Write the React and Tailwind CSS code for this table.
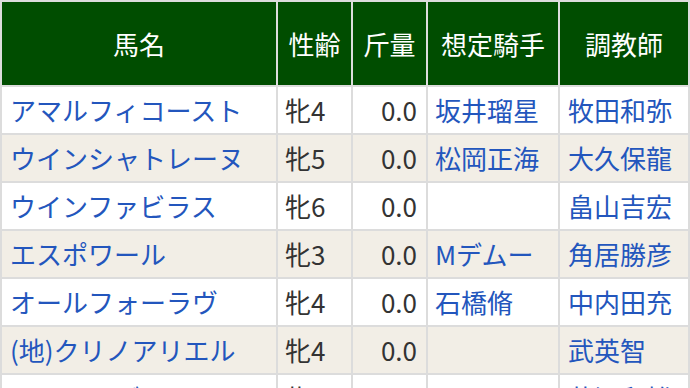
import React from 'react';

const rows = [
  { name: 'アマルフィコースト', age: '牝4', weight: '0.0', jockey: '坂井瑠星', trainer: '牧田和弥' },
  { name: 'ウインシャトレーヌ', age: '牝5', weight: '0.0', jockey: '松岡正海', trainer: '大久保龍' },
  { name: 'ウインファビラス', age: '牝6', weight: '0.0', jockey: '', trainer: '畠山吉宏' },
  { name: 'エスポワール', age: '牝3', weight: '0.0', jockey: 'Mデムー', trainer: '角居勝彦' },
  { name: 'オールフォーラヴ', age: '牝4', weight: '0.0', jockey: '石橋脩', trainer: '中内田充' },
  { name: '(地)クリノアリエル', age: '牝4', weight: '0.0', jockey: '', trainer: '武英智' },
  { name: 'カントラディーヌ', age: '牝4', weight: '0.0', jockey: 'ルメール', trainer: '藤沢和雄' },
];

const headers = ['馬名', '性齢', '斤量', '想定騎手', '調教師'];

const App = () => {
  return (
    <div
      className="w-[690px] h-[388px] overflow-hidden bg-white"
      style={{ fontFamily: '"Noto Sans CJK JP", "Noto Sans", sans-serif' }}
    >
      <div className="grid grid-cols-[274px_73px_73px_130px_128px] gap-[2px] bg-[#dcdcdc] p-[2px] text-[26px] leading-none">
        {headers.map((h) => (
          <div key={h} className="h-[83px] bg-[#004d00] text-white flex items-center justify-center">
            {h}
          </div>
        ))}
        {rows.map((r, i) => {
          const bg = i % 2 === 0 ? 'bg-white' : 'bg-[#f2eee6]';
          return (
            <React.Fragment key={r.name}>
              <div className={`h-[46px] ${bg} flex items-center pl-2 text-[#2356bd] whitespace-nowrap`}>{r.name}</div>
              <div className={`h-[46px] ${bg} flex items-center pl-[7px] text-[#333]`}>{r.age}</div>
              <div className={`h-[46px] ${bg} flex items-center justify-end pr-[9px] text-[#333]`}>{r.weight}</div>
              <div className={`h-[46px] ${bg} flex items-center pl-[7px] text-[#2356bd] whitespace-nowrap`}>{r.jockey}</div>
              <div className={`h-[46px] ${bg} flex items-center pl-2 text-[#2356bd] whitespace-nowrap`}>{r.trainer}</div>
            </React.Fragment>
          );
        })}
      </div>
    </div>
  );
};

export default App;
